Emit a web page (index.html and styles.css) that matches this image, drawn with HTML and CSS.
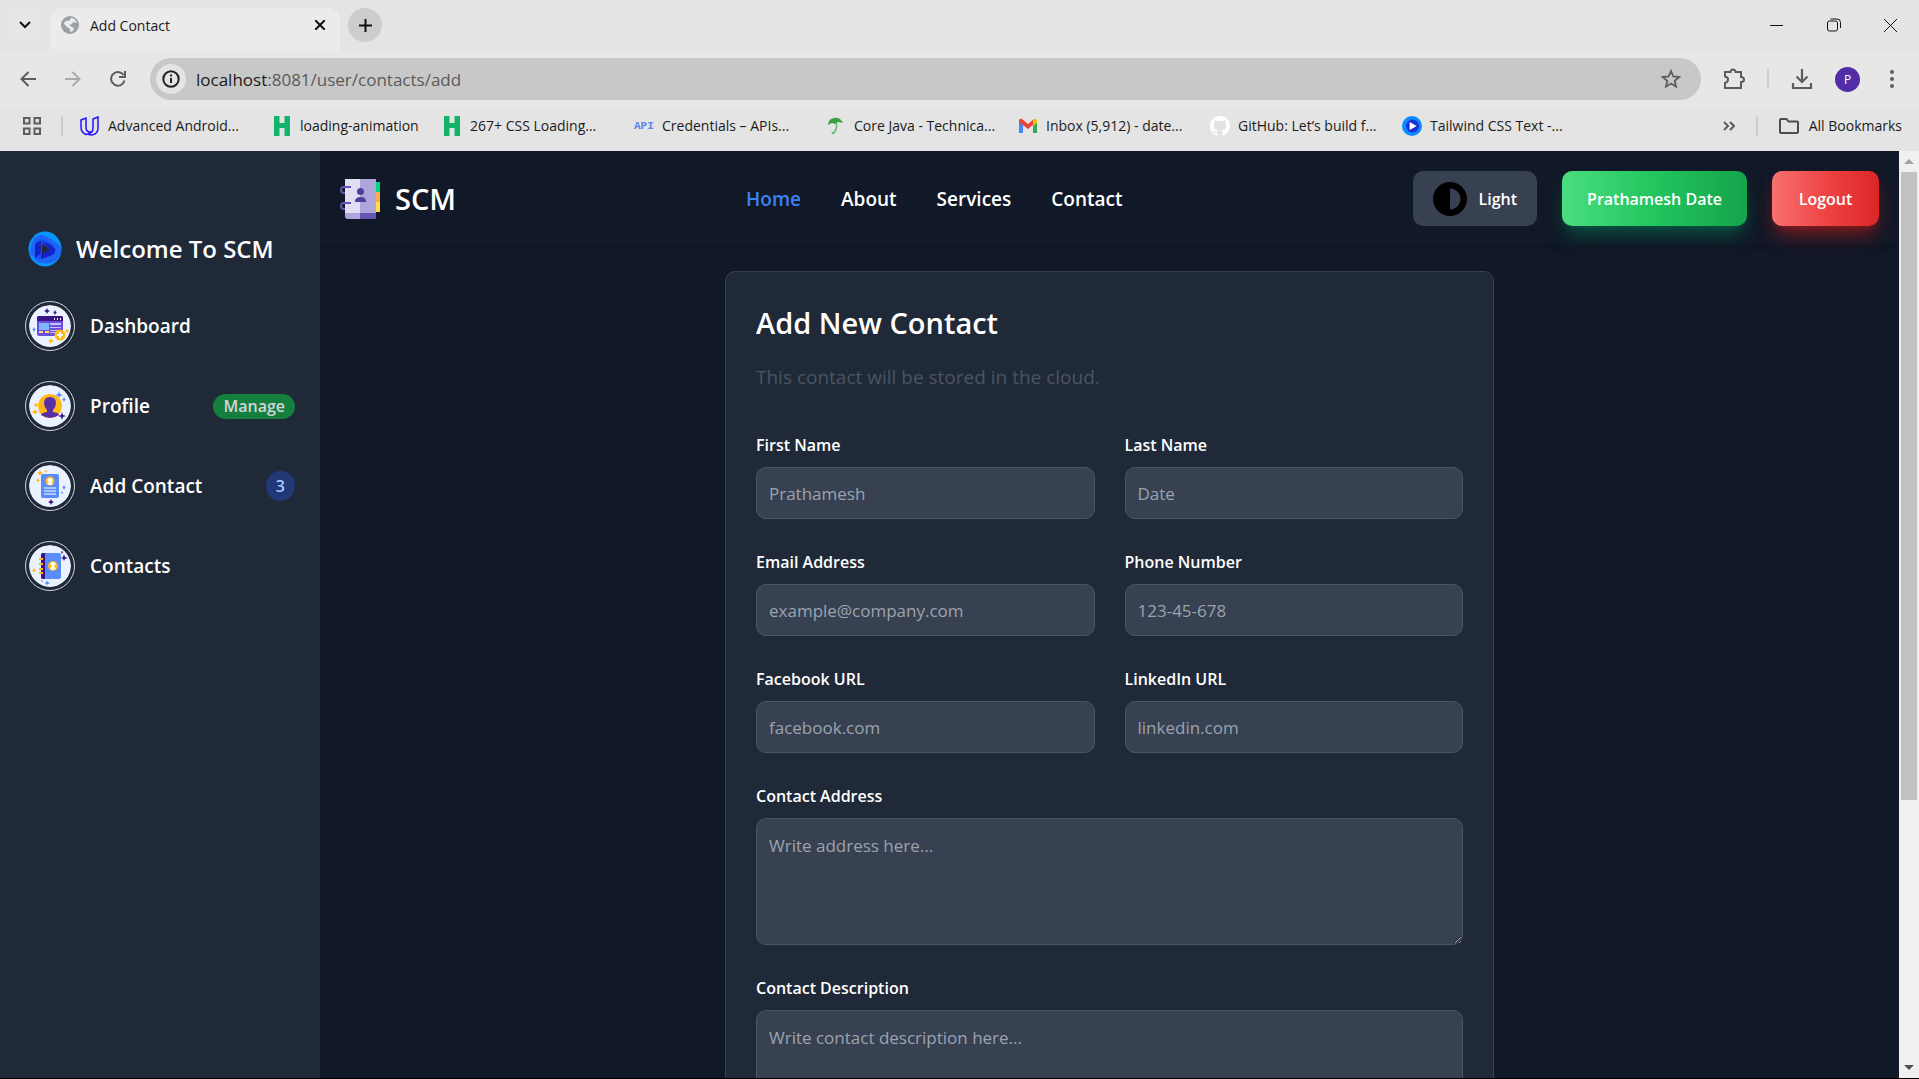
FILE: index.html
```html
<!DOCTYPE html>
<html lang="en">
<head>
<meta charset="utf-8">
<title>Add Contact</title>
<meta name="viewport" content="width=device-width, initial-scale=1">
<link rel="stylesheet" href="styles.css">
</head>
<body>
<div class="browser">
  <div class="tabstrip">
    <button class="tab-search" aria-label="Search tabs">
      <svg width="12" height="8" viewBox="0 0 12 8" fill="none" stroke="#111" stroke-width="2"><path d="M1 1l5 5 5-5"/></svg>
    </button>
    <div class="tab">
      <svg width="18" height="18" viewBox="0 0 18 18"><circle cx="9" cy="9" r="9" fill="#9aa0a6"/><path d="M10 2c3 0 5 2 6 5l-4-1-1 2-3 1 3 2 2 1-1 3-3 1v-3l-3-2-3-3C3 5 6 4 8 5z" fill="#ebebeb"/></svg>
      <span class="tab-title">Add Contact</span>
      <button class="tab-close" aria-label="Close tab">
        <svg width="10" height="10" viewBox="0 0 10 10" stroke="#111" stroke-width="2"><path d="M0 0l10 10M10 0L0 10"/></svg>
      </button>
    </div>
    <button class="new-tab" aria-label="New tab">
      <svg width="13" height="13" viewBox="0 0 13 13" stroke="#111" stroke-width="2"><path d="M6.500 0v13M0 6.500h13"/></svg>
    </button>
    <div class="window-controls">
      <button aria-label="Minimize"><svg width="13" height="13" viewBox="0 0 13 13" stroke="#111"><path d="M0 6.500h13"/></svg></button>
      <button aria-label="Restore"><svg width="14" height="14" viewBox="0 0 14 14" fill="none" stroke="#111"><rect x=".5" y="3" width="10" height="10" rx="2"/><path d="M3.500 1h6.500q3.500 0 3.500 3.500V10"/></svg></button>
      <button aria-label="Close"><svg width="13" height="13" viewBox="0 0 13 13" stroke="#111"><path d="M0 0l13 13M13 0L0 13"/></svg></button>
    </div>
  </div>
  <div class="toolbar">
    <button class="tool" aria-label="Back"><svg width="16" height="16" viewBox="0 0 16 16" fill="none" stroke="#5a5d61" stroke-width="2"><path d="M16 8H2M8.500 1L1.500 8l7 7"/></svg></button>
    <button class="tool" aria-label="Forward"><svg width="16" height="16" viewBox="0 0 16 16" fill="none" stroke="#aaa" stroke-width="2"><path d="M0 8h14M7.500 1l7 7-7 7"/></svg></button>
    <button class="tool" aria-label="Reload"><svg width="16" height="16" viewBox="0 0 16 16" fill="none" stroke="#5a5d61" stroke-width="2"><path d="M14.500 9.500A6.800 6.800 0 1 1 13.500 4M15 0v6H9"/></svg></button>
    <div class="omnibox">
      <button class="site-info" aria-label="Site information"><svg width="18" height="18" viewBox="0 0 18 18" fill="none" stroke="#222" stroke-width="2"><circle cx="9" cy="9" r="7.700"/><path d="M9 8v5M9 4.500v2"/></svg></button>
      <span class="url"><b>localhost</b>:8081/user/contacts/add</span>
      <button class="star" aria-label="Bookmark this tab"><svg width="20" height="20" viewBox="0 0 20 20" fill="none" stroke="#5a5d61" stroke-width="1.800"><path d="M10 2l2.300 5.500 5.900.5-4.500 3.900 1.400 5.800L10 14.600l-5.100 3.100 1.400-5.800L1.800 8l5.900-.5z"/></svg></button>
    </div>
    <div class="tool-end">
      <button aria-label="Extensions"><svg width="22" height="22" viewBox="0 0 22 22" fill="none" stroke="#5a5d61" stroke-width="2"><path d="M2 4h5.500q0-2.500 2.500-2.500T12.500 4H18v5q3 0 3 2.500T18 14v6H2v-5q3-1 3-3.500T2 8.500z"/></svg></button>
      <i class="rule"></i>
      <button aria-label="Downloads"><svg width="22" height="22" viewBox="0 0 22 22" fill="none" stroke="#5a5d61" stroke-width="2.200"><path d="M11 1v13M5.500 8.500L11 14l5.500-5.500M2 15v5h18v-5"/></svg></button>
      <button class="avatar" aria-label="Profile">P</button>
      <button class="more" aria-label="Menu"><svg width="4" height="18" viewBox="0 0 4 18" fill="#5a5d61"><circle cx="2" cy="2" r="2"/><circle cx="2" cy="9" r="2"/><circle cx="2" cy="16" r="2"/></svg></button>
    </div>
  </div>
  <div class="bookmarks">
    <button class="apps" aria-label="Apps"><svg width="18" height="18" viewBox="0 0 18 18" fill="none" stroke="#5a5d61" stroke-width="2"><path d="M1 1h5.500v5.500H1zM11.500 1H17v5.500h-5.500zM1 11.500h5.500V17H1zM11.500 11.500H17V17h-5.500z"/></svg></button>
    <i class="rule"></i>
    <a class="bookmark" href="#"><svg width="20" height="20" viewBox="0 0 20 20" fill="none" stroke="#2015ff" stroke-width="1.500"><path d="M1 4l5-2v9q0 5 4 5-2 3.500-5 2-4-2-4-7zM13 3l5-2v11q0 6-6 7-3 0-4-1 5-1 5-6z"/></svg>Advanced Android...</a>
    <a class="bookmark bookmark-short" href="#"><svg width="20" height="20" viewBox="0 0 20 20"><path d="M2 0h5.500v7h5V0H18v20h-5.500v-8h-5v8H2z" fill="#12b36b"/></svg>loading-animation</a>
    <a class="bookmark" href="#"><svg width="20" height="20" viewBox="0 0 20 20"><path d="M2 0h5.500v7h5V0H18v20h-5.500v-8h-5v8H2z" fill="#12b36b"/></svg>267+ CSS Loading...</a>
    <a class="bookmark" href="#"><span class="api-icon">API</span>Credentials – APIs...</a>
    <a class="bookmark" href="#"><svg width="20" height="20" viewBox="0 0 20 20"><path d="M2 9q0-6 6-7 6-1 9 5l-5-1-3 2-3-1z" fill="#3a9e43"/><path d="M10 6q2 5-2 11-1 1-2-1" fill="none" stroke="#5bb564" stroke-width="1.500"/></svg>Core Java - Technica...</a>
    <a class="bookmark" href="#"><svg width="20" height="20" viewBox="0 0 20 20"><path d="M1 5h4v12H1z" fill="#4285f4"/><path d="M15 5h4v12h-4z" fill="#34a853"/><path d="M1 4q1-2 3-1l6 5 6-5v5l-6 5-9-7z" fill="#ea4335"/><path d="M15 4q2-2 4 0v3l-4 3z" fill="#fbbc04"/></svg>Inbox (5,912) - date...</a>
    <a class="bookmark" href="#"><svg width="20" height="20" viewBox="0 0 16 16" fill="#fff"><path d="M8 0C3.580 0 0 3.580 0 8c0 3.540 2.290 6.530 5.470 7.590.4.070.55-.17.55-.38 0-.19-.01-.82-.01-1.490-2.010.37-2.530-.49-2.690-.94-.09-.23-.48-.94-.82-1.130-.28-.15-.68-.52-.01-.53.63-.01 1.080.58 1.230.82.72 1.210 1.870.87 2.330.66.07-.52.28-.87.51-1.070-1.780-.2-3.640-.89-3.640-3.950 0-.87.31-1.590.82-2.150-.08-.2-.36-1.020.08-2.120 0 0 .67-.21 2.200.82a7.600 7.600 0 0 1 4 0c1.530-1.040 2.200-.82 2.200-.82.44 1.100.16 1.920.08 2.120.51.56.82 1.270.82 2.150 0 3.070-1.870 3.750-3.650 3.950.29.25.54.73.54 1.480 0 1.070-.01 1.930-.01 2.200 0 .21.15.46.55.38A8 8 0 0 0 8 0z"/></svg>GitHub: Let’s build f...</a>
    <a class="bookmark" href="#"><svg width="20" height="20" viewBox="0 0 34 34"><circle cx="17" cy="17" r="17" fill="#0a8cff"/><circle cx="18" cy="17" r="11" fill="#1a2fd8"/><path d="M13 10l12 7-12 7z" fill="#fff"/></svg>Tailwind CSS Text -...</a>
    <div class="bookmarks-end">
      <button aria-label="More bookmarks"><svg width="12" height="10" viewBox="0 0 12 10" fill="none" stroke="#5a5d61" stroke-width="2"><path d="M1 1l4 4-4 4M7 1l4 4-4 4"/></svg></button>
      <i class="rule"></i>
      <a href="#"><svg width="20" height="16" viewBox="0 0 20 16" fill="none" stroke="#4a4d51" stroke-width="2"><path d="M1 2q0-1 1-1h5.500l2 2.500H18q1 0 1 1V14q0 1-1 1H2q-1 0-1-1z"/></svg>All Bookmarks</a>
    </div>
  </div>
</div>

<div class="viewport">
  <aside class="sidebar">
    <a class="brand" href="#">
      <svg width="34" height="36" viewBox="0 0 34 36"><ellipse cx="17" cy="18" rx="16.500" ry="17.500" fill="#0a94ff"/><path d="M2 24Q3 4 13 4q5 0 16 8 7 6 2 14-6 8-16 6-9 0-9-6z" fill="#1b66f6"/><path d="M7 26V15q0-8 8-7 9 3 12 9 2 6-6 8l-8 3q-4 1-6-2z" fill="#1650ee"/><path d="M14 11l-1 2v9l-6 5V15q1-5 7-4zM14 11q8 1 13 7 1 5-5 7l-9 3v-5l9-5z" fill="#1620c4"/><path d="M14 13l8 5-8 5z" fill="#1f2937"/></svg>
      <span>Welcome To SCM</span>
    </a>
    <nav class="menu" aria-label="Sidebar">
      <a class="menu-item" href="#">
        <svg class="menu-icon" viewBox="0 0 42 42"><circle cx="21" cy="21" r="21" fill="#ebf2ff"/><rect x="8" y="11" width="26" height="20" rx="2" fill="#6b4fe0"/><path d="M8 16v-3q0-2 2-2h22q2 0 2 2v3z" fill="#3a1485"/><path d="M25 13h1v2h-1zM28 13h1v2h-1zM31 13h1v2h-1z" fill="#fff"/><rect x="10" y="18" width="10" height="7" fill="#7db8ff"/><path d="M21 18h11v2H21zM21 22h11v1H21zM21 25h8v1h-8zM21 27h6v1h-6z" fill="#c9c2f8"/><path d="M10 26h4v2h-4zM16 26h4v2h-4z" fill="#ffd873"/><circle cx="31" cy="30" r="5.500" fill="#ffb916"/><path d="M31 27v6M28 30h6" stroke="#fff" stroke-width="2"/><path d="M18 3l1 2 2 1-2 1-1 2-1-2-2-1 2-1zM26 5l1 2 1 .5-1 .5-1 2-1-2-1-.5 1-.5z" fill="#3a1485"/><path d="M5 22l1 2 1 .5-1 .5-1 2-1-2-1-.5 1-.5z" fill="#5a8dfa"/><path d="M22 33l1 2 2 1-2 1-1 2-1-2-2-1 2-1zM38 24l1 1 1 1-1 1-1 1-1-1-1-1 1-1z" fill="#ffb916"/></svg>
        <span class="menu-label">Dashboard</span>
      </a>
      <a class="menu-item" href="#">
        <svg class="menu-icon" viewBox="0 0 42 42"><circle cx="21" cy="21" r="21" fill="#ebf2ff"/><circle cx="21" cy="21" r="12" fill="#ffb916"/><path d="M15 18q0-6 6-6t6 6q0 4-3 7v2q6 1 6 3-9 6-18 0 0-2 6-3v-2q-3-3-3-7z" fill="#5a2ea6"/><path d="M30 6l1 3 3 1-3 1-1 2-1-2-3-1 3-1zM35 12l1 2 1 .5-1 .5-1 2-1-2-1-.5 1-.5z" fill="#5a8dfa"/><path d="M6 24l1 2 3 1-3 1-1 2-1-2-3-1 3-1zM7 18l1 1 1 1-1 1-1 1-1-1-1-1 1-1z" fill="#ffb916"/><path d="M33 27l1 3 3 1-3 1-1 3-1-3-3-1 3-1z" fill="#3a1485"/></svg>
        <span class="menu-label">Profile</span>
        <span class="badge badge-green">Manage</span>
      </a>
      <a class="menu-item" href="#">
        <svg class="menu-icon" viewBox="0 0 42 42"><circle cx="21" cy="21" r="21" fill="#ebf2ff"/><rect x="12" y="9" width="18" height="24" rx="2" fill="#5a8dfa"/><circle cx="21" cy="16" r="4.500" fill="#ffb916"/><path d="M21 13a2 2 0 0 1 1 4l2 2q-3 2-6 0l2-2a2 2 0 0 1 1-4z" fill="#fff"/><path d="M15 23h12M15 26h12M15 29h12" stroke="#fff"/><path d="M11 5l1 2 2 1-2 1-1 2-1-2-2-1 2-1zM17 4l.5 2 1 .5-1 .5-.5 1-.5-1-1-.5 1-.5zM9 13l1 2 1 .5-1 .5-1 1-1-1-1-.5 1-.5z" fill="#ffb916"/><path d="M35 20l1 2 1 .5-1 .5-1 2-1-2-1-.5 1-.5zM33 26l1 2-1 1-1-1z" fill="#5a8dfa"/><path d="M22 34l1 2 2 1-2 1-1 2-1-2-2-1 2-1z" fill="#3a1485"/></svg>
        <span class="menu-label">Add Contact</span>
        <span class="badge badge-blue">3</span>
      </a>
      <a class="menu-item" href="#">
        <svg class="menu-icon" viewBox="0 0 42 42"><circle cx="21" cy="21" r="21" fill="#ebf2ff"/><rect x="12" y="8" width="20" height="26" rx="2" fill="#5a8dfa"/><path d="M16 8h-2q-2 0-2 2v22q0 2 2 2h2z" fill="#3a1485"/><circle cx="24" cy="21" r="5" fill="#ffb916"/><path d="M24 17a2 2 0 0 1 1 4l2 3q-3 2-6 0l2-3a2 2 0 0 1 1-4z" fill="#fff"/><path d="M10 14h4M10 19h4M10 24h4M10 28h4" stroke="#ffb916" stroke-width="2"/><path d="M35 9l1 3 3 1-3 1-1 2-1-2-2-1 2-1zM33 6l1 1-1 2-1-2z" fill="#3a1485"/><path d="M5 23l1 2 2 .5-2 .5-1 2-1-2-2-.5 2-.5z" fill="#ffb916"/><path d="M18 36l1 1 2 1-2 1-1 1-1-1-1-1 1-1zM13 35l1 1-1 1-1-1z" fill="#5a8dfa"/></svg>
        <span class="menu-label">Contacts</span>
      </a>
    </nav>
  </aside>

  <div class="page">
    <header class="navbar">
      <a class="logo" href="#">
        <svg width="40" height="40" viewBox="0 0 40 40"><path d="M35 3h5v10h-5z" fill="#00d97a"/><path d="M35 13h5v10h-5z" fill="#ffab4a"/><path d="M35 23h5v10h-5z" fill="#ffdd4a"/><path d="M5 0h16v34H5z" fill="#e0def2"/><path d="M20 0h16v34H20z" fill="#aea6da"/><path d="M5 34h15v6H8q-3 0-3-3z" fill="#aea6da"/><path d="M20 34h16v6H20z" fill="#6554b4"/><path d="M11 8H4a3 3 0 0 0 0 6h1M11 24H4a3 3 0 0 0 0 6h1" fill="none" stroke="#6554b4" stroke-width="2"/><circle cx="20.500" cy="12.500" r="3.500" fill="#4f3f9c"/><path d="M15 23q0-5 5.500-5t5.500 5z" fill="#4f3f9c"/></svg>
        <span>SCM</span>
      </a>
      <nav class="links" aria-label="Main">
        <a class="active" href="#">Home</a>
        <a href="#">About</a>
        <a href="#">Services</a>
        <a href="#">Contact</a>
      </nav>
      <div class="actions">
        <button class="btn btn-theme"><svg width="34" height="34" viewBox="0 0 34 34"><path fill-rule="evenodd" d="M17 0a17 17 0 1 1 0 34 17 17 0 0 1 0-34zm0 6.500v21a10.500 10.500 0 0 0 0-21z"/></svg>Light</button>
        <button class="btn btn-green">Prathamesh Date</button>
        <button class="btn btn-red">Logout</button>
      </div>
    </header>
    <main class="content">
      <form class="card">
        <h1>Add New Contact</h1>
        <p class="hint">This contact will be stored in the cloud.</p>
        <div class="fields">
          <div class="field"><label for="first">First Name</label><input id="first" type="text" placeholder="Prathamesh"></div>
          <div class="field"><label for="last">Last Name</label><input id="last" type="text" placeholder="Date"></div>
          <div class="field"><label for="email">Email Address</label><input id="email" type="email" placeholder="example@company.com"></div>
          <div class="field"><label for="phone">Phone Number</label><input id="phone" type="tel" placeholder="123-45-678"></div>
          <div class="field"><label for="facebook">Facebook URL</label><input id="facebook" type="text" placeholder="facebook.com"></div>
          <div class="field"><label for="linkedin">LinkedIn URL</label><input id="linkedin" type="text" placeholder="linkedin.com"></div>
          <div class="field wide"><label for="address">Contact Address</label><textarea id="address" placeholder="Write address here..."></textarea></div>
          <div class="field wide"><label for="description">Contact Description</label><textarea id="description" placeholder="Write contact description here..."></textarea></div>
        </div>
      </form>
    </main>
  </div>

  <div class="scrollbar" aria-hidden="true">
    <svg width="10" height="5" viewBox="0 0 10 5"><path d="M0 5l5-5 5 5z" fill="#a3a3a3"/></svg>
    <div class="track"><div class="thumb"></div></div>
    <svg width="10" height="5" viewBox="0 0 10 5"><path d="M0 0l5 5 5-5z" fill="#505050"/></svg>
  </div>
</div>
</body>
</html>
```
FILE: styles.css
```css
* {
  box-sizing: border-box;
}

body {
  margin: 0;
  height: 100vh;
  display: flex;
  flex-direction: column;
  overflow: hidden;
  border-bottom: 1px solid #000;
  background: #111827;
  font-family: "Open Sans", "Noto Sans", sans-serif;
}

a {
  color: inherit;
  text-decoration: none;
}

button {
  display: flex;
  align-items: center;
  justify-content: center;
  padding: 0;
  border: 0;
  background: none;
  color: inherit;
  font-family: inherit;
}

svg {
  display: block;
  flex: none;
}

/* Browser frame */
.browser {
  flex: none;
  background: #e4e4e4;
  color: #1b1b1b;
  font-size: 14px;
}

.tabstrip {
  display: flex;
  align-items: center;
  height: 50px;
  padding-left: 8px;
}

.tab-search {
  width: 34px;
  height: 34px;
  border-radius: 10px;
  background: #e6e6e6;
}

.tab {
  align-self: flex-end;
  display: flex;
  align-items: center;
  gap: 11px;
  width: 290px;
  height: 42px;
  margin-left: 8px;
  padding: 0 15px 8px 11px;
  border-radius: 12px 12px 0 0;
  background: #ebebeb;
}

.tab-title {
  flex: 1;
}

.new-tab {
  width: 34px;
  height: 34px;
  margin-left: 8px;
  border-radius: 50%;
  background: #cdcdcd;
}

.window-controls {
  display: flex;
  margin-left: auto;
}

.window-controls button {
  width: 57px;
  height: 50px;
}

.toolbar {
  display: flex;
  align-items: center;
  height: 58px;
  padding: 0 17px 0 5px;
  background: #e7e7e7;
}

.tool {
  width: 45px;
  height: 42px;
}

.omnibox {
  flex: 1;
  display: flex;
  align-items: center;
  gap: 10px;
  height: 42px;
  margin-left: 10px;
  padding: 0 20px 0 6px;
  border-radius: 21px;
  background: #c8c8c8;
}

.site-info {
  width: 30px;
  height: 30px;
  border-radius: 50%;
  background: #e4e4e4;
}

.url {
  flex: 1;
  color: #5a5a5a;
  font-size: 17px;
}

.url b {
  color: #1b1b1b;
  font-weight: 400;
}

.tool-end {
  display: flex;
  align-items: center;
  gap: 22px;
  padding-left: 22px;
}

.rule {
  width: 2px;
  height: 20px;
  background: #cdcdcd;
}

.tool-end .avatar {
  width: 25px;
  height: 25px;
  border-radius: 50%;
  background: #512da8;
  color: #fff;
  font-size: 12px;
}

.tool-end .more {
  width: 20px;
}

.bookmarks {
  display: flex;
  align-items: center;
  height: 43px;
  padding: 0 17px 8px 23px;
}

.apps {
  width: 18px;
}

.apps + .rule {
  margin: 0 17px 0 20px;
}

.bookmark {
  display: flex;
  align-items: center;
  gap: 8px;
  width: 192px;
  white-space: nowrap;
}

.bookmark-short {
  width: 170px;
}

.api-icon {
  width: 20px;
  color: #5a86ee;
  font: 700 11px "Liberation Mono", monospace;
}

.bookmarks-end {
  display: flex;
  align-items: center;
  gap: 21px;
  margin-left: auto;
  white-space: nowrap;
}

.bookmarks-end a {
  display: flex;
  align-items: center;
  gap: 10px;
}

/* Page */
.viewport {
  flex: 1;
  display: flex;
  min-height: 0;
  color: #fff;
}

.sidebar {
  flex: none;
  width: 320px;
  padding: 80px 25px;
  background: #1f2937;
}

.brand {
  display: flex;
  align-items: center;
  gap: 14px;
  margin-left: 3px;
  font-size: 24px;
  font-weight: 600;
  line-height: 36px;
}

.menu {
  display: flex;
  flex-direction: column;
  gap: 30px;
  margin-top: 34px;
}

.menu-item {
  display: flex;
  align-items: center;
  font-size: 19px;
  font-weight: 600;
}

.menu-icon {
  width: 50px;
  height: 50px;
  padding: 3px;
  border: 1px solid #d1d5db;
  border-radius: 50%;
}

.menu-label {
  flex: 1;
  margin-left: 15px;
}

.badge {
  padding: 0 10px;
  border-radius: 15px;
  font-size: 16px;
  line-height: 25px;
}

.badge-green {
  background: #15803d;
  color: #d1d5db;
}

.badge-blue {
  background: #233876;
  color: #a4cafe;
  line-height: 30px;
}

.page {
  flex: 1;
  display: flex;
  flex-direction: column;
  min-width: 0;
  overflow: hidden;
}

.navbar {
  flex: none;
  display: flex;
  align-items: center;
  justify-content: space-between;
  padding: 20px;
  box-shadow: 0 1px 4px rgba(0, 0, 0, 0.25);
}

.logo {
  display: flex;
  align-items: center;
  gap: 15px;
  font-size: 29px;
  font-weight: 600;
}

.links {
  display: flex;
  gap: 40px;
  font-size: 19px;
  font-weight: 600;
}

.links .active {
  color: #3b82f6;
}

.actions {
  display: flex;
  gap: 25px;
}

.btn {
  gap: 12px;
  height: 55px;
  padding: 0 25px;
  border-radius: 10px;
  color: #fff;
  font-size: 16px;
  font-weight: 600;
}

.btn-theme {
  padding: 0 20px;
  background: #374151;
}

.btn-green {
  background: linear-gradient(to right, #4ade80, #22c55e, #16a34a);
  box-shadow: 0 12px 19px -4px rgba(6, 95, 70, 0.8), 0 5px 7px -5px rgba(6, 95, 70, 0.8);
}

.btn-red {
  min-width: 107px;
  background: linear-gradient(to right, #f87171, #ef4444, #dc2626);
  box-shadow: 0 12px 19px -4px rgba(153, 27, 27, 0.8), 0 5px 7px -5px rgba(153, 27, 27, 0.8);
}

.content {
  flex: 1;
  min-height: 0;
  padding: 25px 20px 0;
}

.card {
  max-width: 769px;
  margin: 0 auto;
  padding: 30px;
  border: 1px solid #374151;
  border-radius: 10px;
  background: #1f2937;
}

.card h1 {
  margin: 0;
  font-size: 29px;
  font-weight: 600;
  line-height: 42px;
}

.hint {
  margin: 18px 0 40px;
  color: #4b5563;
  font-size: 19px;
  line-height: 30px;
}

.fields {
  display: grid;
  grid-template-columns: 1fr 1fr;
  gap: 30px;
}

.wide {
  grid-column: 1 / -1;
}

.field label {
  display: block;
  margin-bottom: 8px;
  font-size: 16px;
  font-weight: 600;
  line-height: 27px;
}

.field input,
.field textarea {
  display: block;
  width: 100%;
  height: 52px;
  padding: 12px;
  border: 1px solid #4b5563;
  border-radius: 10px;
  background: #374151;
  color: #fff;
  font-family: inherit;
  font-size: 17px;
  line-height: 25px;
}

.field textarea {
  height: 127px;
  padding: 14px 12px;
}

::placeholder {
  color: #9ca3af;
  opacity: 1;
}

.scrollbar {
  flex: none;
  display: flex;
  flex-direction: column;
  align-items: center;
  gap: 8px;
  width: 20px;
  padding: 8px 0;
  background: #f0f0f0;
}

.track {
  flex: 1;
  width: 16px;
}

.thumb {
  height: 71%;
  background: #c1c1c1;
}
```
